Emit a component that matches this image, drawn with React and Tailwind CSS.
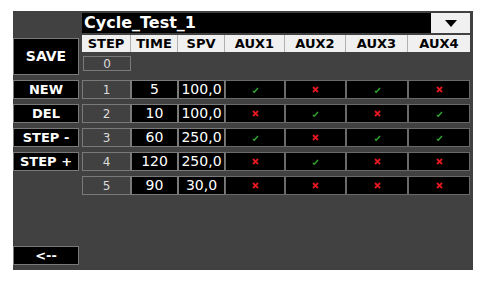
import React from 'react';

const font = { fontFamily: '"DejaVu Sans", Verdana, sans-serif' };

const rows = [
  { step: 1, time: '5', spv: '100,0', aux: [1, 0, 1, 0] },
  { step: 2, time: '10', spv: '100,0', aux: [0, 1, 0, 1] },
  { step: 3, time: '60', spv: '250,0', aux: [1, 0, 1, 1] },
  { step: 4, time: '120', spv: '250,0', aux: [0, 1, 0, 0] },
  { step: 5, time: '90', spv: '30,0', aux: [0, 0, 0, 0] },
];

const widths = ['w-[49px]', 'w-[47px]', 'w-[47px]', 'w-[60px]', 'w-[61px]', 'w-[62px]', 'w-[62px]'];
const headers = ['STEP', 'TIME', 'SPV', 'AUX1', 'AUX2', 'AUX3', 'AUX4'];

function Check() {
  return (
    <svg width="7" height="6" viewBox="0 0 7 6">
      <path d="M1 4 L2.2 5.2 L6 1" stroke="#2fa52f" strokeWidth="1.5" fill="none" />
    </svg>
  );
}

function Cross() {
  return (
    <svg width="7" height="7" viewBox="0 0 7 7">
      <path d="M1 1 L6 6 M6 1 L1 6" stroke="#e5171f" strokeWidth="1.8" fill="none" />
    </svg>
  );
}

function SideButton({ label, className = '' }) {
  return (
    <button
      className={`w-[66px] flex items-center justify-center bg-black border border-[#7a7a7a] text-white font-bold ${className}`}
    >
      {label}
    </button>
  );
}

export default function App() {
  return (
    <div className="w-[490px] h-[286px] bg-white pt-[11px] pl-[13px]" style={font}>
      <div className="w-[460px] h-[259px] bg-[#414141] flex">
        {/* left buttons */}
        <div className="flex flex-col w-[66px]">
          <SideButton label="SAVE" className="mt-[27px] h-[37px] text-[14px]" />
          <SideButton label="NEW" className="mt-[5px] h-[19px] text-[13px]" />
          <SideButton label="DEL" className="mt-[5px] h-[19px] text-[13px]" />
          <SideButton label="STEP -" className="mt-[5px] h-[19px] text-[13px]" />
          <SideButton label="STEP +" className="mt-[5px] h-[19px] text-[13px]" />
          <SideButton label="<--" className="mt-auto mb-[5px] h-[19px] text-[13px]" />
        </div>

        {/* table */}
        <div className="ml-[3px] w-[388px] flex flex-col">
          <div className="mt-[2px] h-[20px] flex">
            <div className="flex-1 bg-black text-white font-bold text-[16px] leading-[20px] pl-[2px]">
              Cycle_Test_1
            </div>
            <div className="w-[39px] bg-[#f0f0f0] flex items-center justify-center">
              <svg width="12" height="7" viewBox="0 0 12 7">
                <path d="M0 0 H12 L6 7 Z" fill="#000" />
              </svg>
            </div>
          </div>

          <div className="mt-[2px] h-[17px] flex bg-[#f0f0f0]">
            {headers.map((h, i) => (
              <div
                key={h}
                className={`${widths[i]} flex items-center justify-center text-black font-bold text-[13px] border-r border-[#b0b0b0] last:border-r-0`}
              >
                {h}
              </div>
            ))}
          </div>

          <div className="mt-[4px] h-[15px] w-[48px] ml-[1px] flex items-center justify-center border border-[#7a7a7a] text-[#dcdcdc] text-[12px]">
            0
          </div>

          {rows.map((r, idx) => (
            <div key={r.step} className={`${idx === 0 ? 'mt-[9px]' : 'mt-[5px]'} h-[19px] flex`}>
              <div className={`${widths[0]} flex items-center justify-center border border-[#7a7a7a] bg-[#414141] text-[#dcdcdc] text-[12px]`}>
                {r.step}
              </div>
              <div className={`${widths[1]} flex items-center justify-center border border-[#7a7a7a] bg-black text-white text-[14px]`}>
                {r.time}
              </div>
              <div className={`${widths[2]} flex items-center justify-center border border-[#7a7a7a] bg-black text-white text-[14px]`}>
                {r.spv}
              </div>
              {r.aux.map((a, i) => (
                <div
                  key={i}
                  className={`${widths[3 + i]} flex items-center justify-center border border-[#6a6a6a] bg-black`}
                >
                  {a ? <Check /> : <Cross />}
                </div>
              ))}
            </div>
          ))}
        </div>
      </div>
    </div>
  );
}
